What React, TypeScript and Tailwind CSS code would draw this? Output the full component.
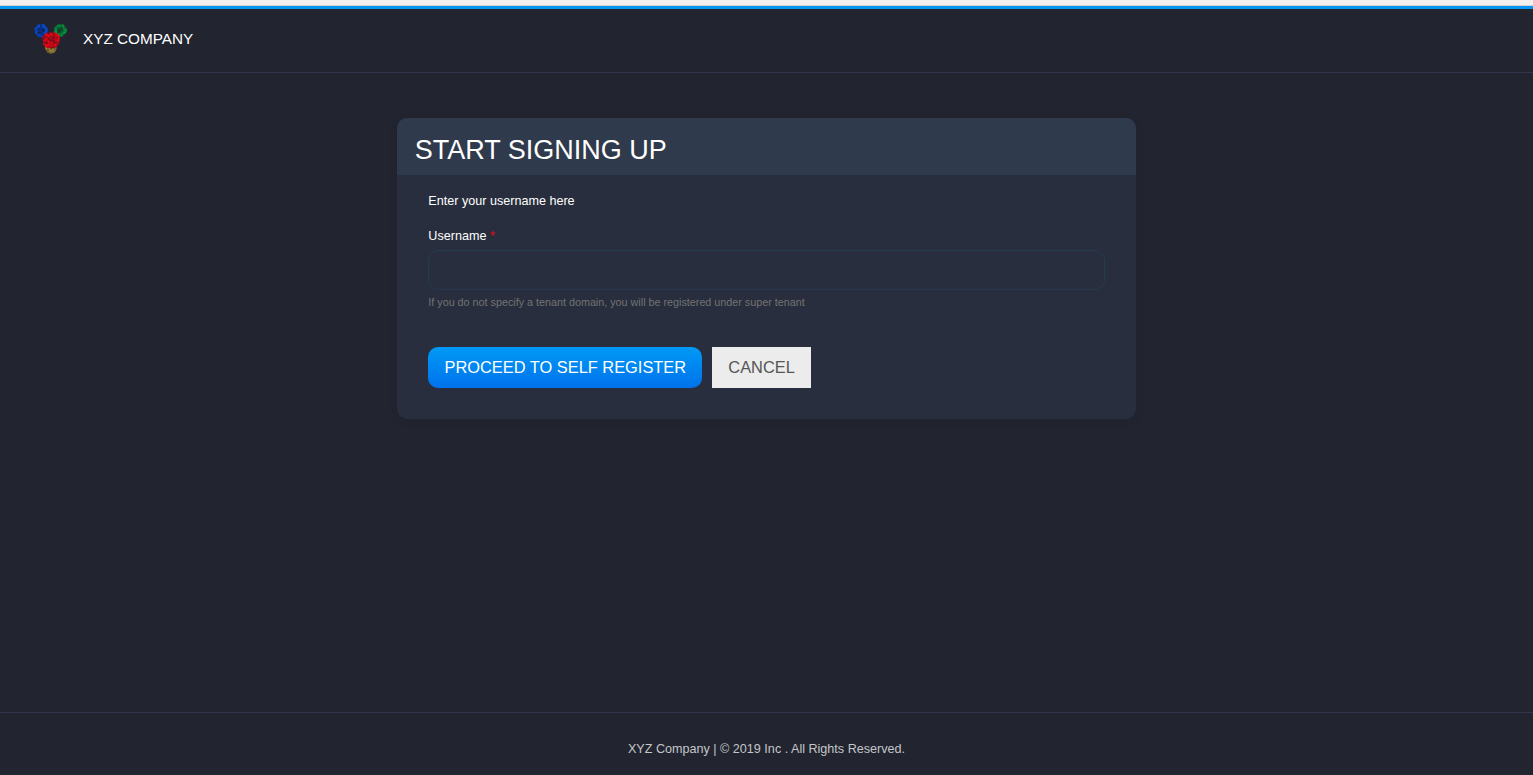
function Logo() {
  return (
    <svg className="h-8 w-9 shrink-0" viewBox="0 0 36 32" aria-hidden="true">
      <defs>
        <filter id="grain" x="0" y="0" width="100%" height="100%" colorInterpolationFilters="sRGB">
          <feTurbulence type="fractalNoise" baseFrequency="0.4" numOctaves="2" seed="4" result="n" />
          <feColorMatrix in="n" type="matrix" values="0 0 0 0 0.1  0 0 0 0 0.08  0 0 0 0 0.12  1.5 0 0 0 -0.55" result="spots" />
          <feComposite in="spots" in2="SourceGraphic" operator="in" result="s" />
          <feMerge>
            <feMergeNode in="SourceGraphic" />
            <feMergeNode in="s" />
          </feMerge>
        </filter>
      </defs>
      <g filter="url(#grain)">
        <path d="M12 22 L23.5 22 L23.5 27 Q22 31.5 18 31.5 Q14 31.5 12.3 27 Z" fill="#9a8038" />
        <path d="M4.5 2.5 L11 2 L14.5 6 L15 11 L11 15 L5.5 15.3 L2 11 L1.3 7 Z" fill="#064cd0" />
        <path d="M24 2.7 L30 2 L34 7 L33.8 10 L29 14.8 L24 14.5 L21 11 L21.3 6 Z" fill="#069a40" />
        <circle cx="8" cy="8.7" r="3.6" fill="#06348f" />
        <circle cx="27.2" cy="8.3" r="3.4" fill="#066331" />
        <path d="M13 10.8 L23 10.5 L27 14 L26 22 L22 26 L14 26.2 L10.3 23 L9.5 15 Z" fill="#e80614" />
        <path d="M15 15 L22 14 L23 20 L17 22 Z" fill="#c20916" />
      </g>
    </svg>
  );
}

export default function App() {
  return (
    <div className="flex h-[775px] w-full flex-col bg-[#222530] font-['Liberation_Sans',Arial,sans-serif] text-[12.6px] text-white">
      <div className="h-[6px] shrink-0 border-b border-[#d8d3cf] bg-[#f2f1f0]" />
      <header className="flex h-[67px] shrink-0 items-start border-t-3 border-b border-t-[#0297f2] border-b-[#31364a] pt-[13px] pl-[33px]">
        <Logo />
        <span className="ml-[14px] pt-[8px] text-[15.3px] leading-[18px]">XYZ COMPANY</span>
      </header>

      <main className="flex-1 pt-[45px]">
        <section className="mx-auto h-[301px] w-[739px] overflow-hidden rounded-[10px] bg-[#282e3d] shadow-[0_2px_10px_rgba(0,0,0,0.08)]">
          <h2 className="h-[57px] bg-[#2f3a4c] pt-[16px] pl-[17.8px] text-[27px] leading-[32px]">START SIGNING UP</h2>
          <form className="px-[31.3px] pt-[18px]">
            <p className="leading-4">Enter your username here</p>
            <label htmlFor="username" className="mt-[19px] block leading-4">
              Username <span className="text-[#f00019]">*</span>
            </label>
            <input
              id="username"
              type="text"
              className="mt-[6px] block h-[40px] w-full rounded-[10px] border border-[#243b50] bg-transparent px-3 outline-none"
            />
            <p className="mt-[5px] text-[10.78px] leading-[14px] text-[#737373]">
              If you do not specify a tenant domain, you will be registered under super tenant
            </p>
            <div className="mt-[38px] flex gap-[10px] text-[16.4px] leading-[41px]">
              <button type="button" className="h-[41px] w-[274px] rounded-[10px] bg-linear-to-b from-[#0099f5] to-[#0072ec]">
                PROCEED TO SELF REGISTER
              </button>
              <button type="button" className="h-[41px] w-[98.6px] bg-[#ececec] text-[#555555]">
                CANCEL
              </button>
            </div>
          </form>
        </section>
      </main>

      <footer className="h-[63px] shrink-0 border-t border-[#31364a] pt-[28px] text-center leading-4 text-[#c5c6c9]">
        XYZ Company | © 2019 Inc . All Rights Reserved.
      </footer>
    </div>
  );
}
